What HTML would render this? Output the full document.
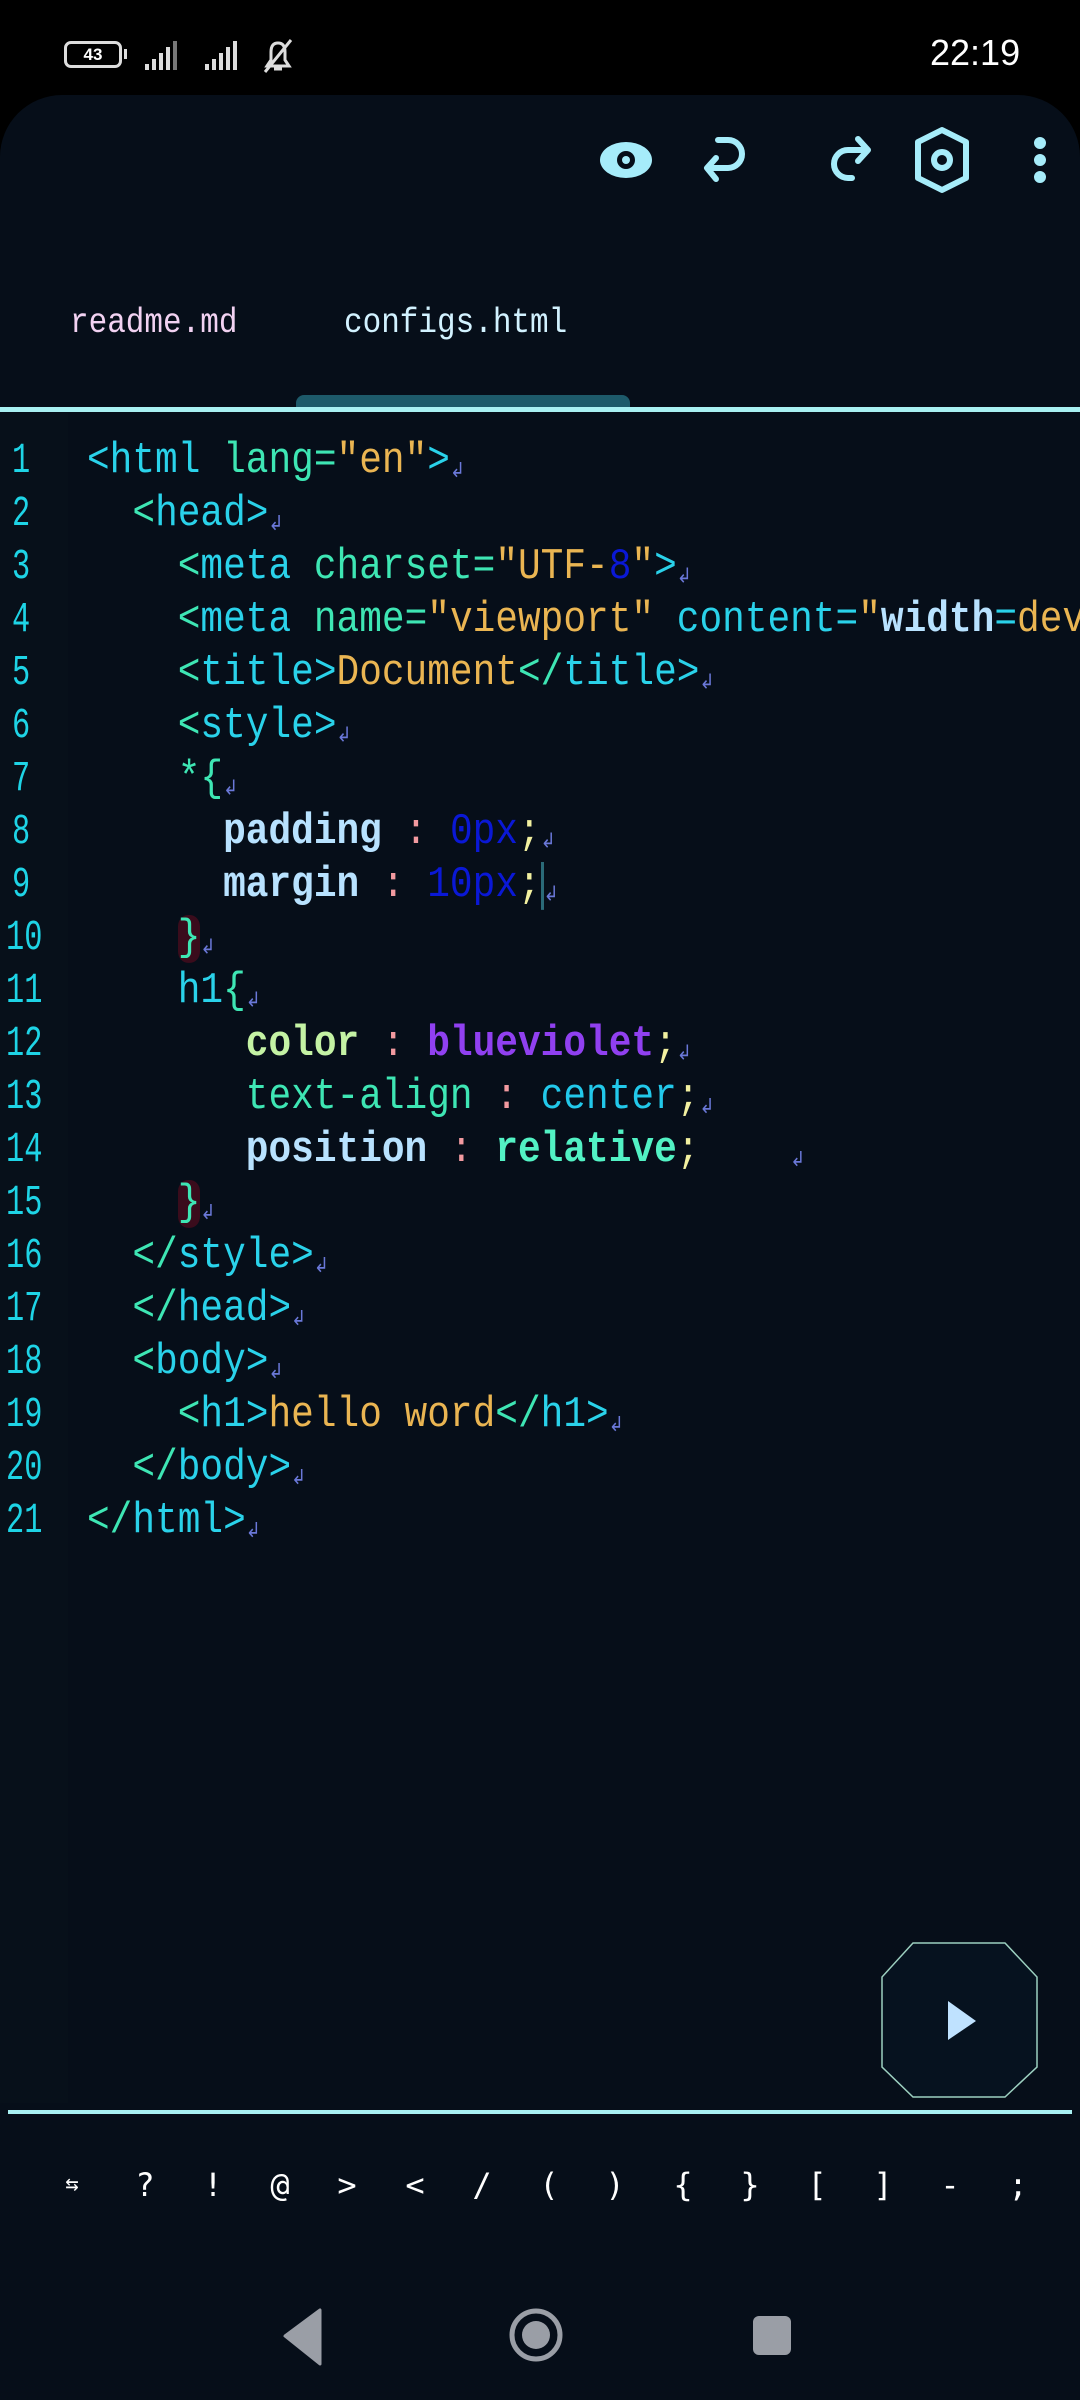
<!DOCTYPE html>
<html><head><meta charset="utf-8"><style>
*{margin:0;padding:0;box-sizing:border-box}
body{width:1080px;height:2400px;background:#000;position:relative;overflow:hidden;font-family:"Liberation Mono",monospace}
.panel{position:absolute;left:0;top:95px;width:1080px;height:2305px;background:#060e19;border-radius:62px 62px 0 0}
.gut{position:absolute;left:0;top:413px;width:68px;height:1690px;background:#07101a}
.ln{position:absolute;left:6px;color:#1ed4e6;font-size:37px;line-height:53px;height:53px;transform:scale(0.82,1.14);transform-origin:left center}
.cl{position:absolute;left:87px;white-space:pre;font-size:37.8px;line-height:53px;height:53px;color:#2ad2ea;transform:scaleY(1.14);transform-origin:left center}
.t{color:#2ad2ea}.a{color:#3ee6b4}.s{color:#eab552}.n{color:#0a18d6}.p{color:#b8e2ff;font-weight:bold}.c{color:#f29aa0}.y{color:#f2f0a0}
.r{color:#6a78d8;font-size:18px;vertical-align:-4px}
.g{color:#3ee6b4}.br{background:#3a0c1c;border-radius:10px}
.sym{position:absolute;top:2166px;color:#fff;font-size:32px;width:40px;text-align:center;font-family:"DejaVu Sans Mono",monospace}
.tab{position:absolute;top:306px;font-size:31px;transform:scaleY(1.15);transform-origin:left center}
</style></head><body>
<div style="position:absolute;left:64px;top:41px;width:58px;height:27px;border:3px solid #ddd;border-radius:7px;color:#fff;font:bold 17px 'Liberation Sans',sans-serif;text-align:center;line-height:21px">43</div>
<div style="position:absolute;left:124px;top:49px;width:3px;height:10px;background:#ddd"></div>
<svg style="position:absolute;left:143px;top:38px" width="160" height="36">
<g fill="#ddd"><rect x="2" y="26" width="4" height="6"/><rect x="9" y="21" width="4" height="11"/><rect x="16" y="15" width="4" height="17"/><rect x="23" y="9" width="4" height="23"/><rect x="30" y="3" width="4" height="29" fill="#777"/>
<rect x="62" y="26" width="4" height="6"/><rect x="69" y="21" width="4" height="11"/><rect x="76" y="15" width="4" height="17"/><rect x="83" y="9" width="4" height="23"/><rect x="90" y="3" width="4" height="29"/></g>
<path d="M124 28 L128 22 L128 14 Q128 5 135 5 Q142 5 142 14 L142 22 L146 28 Z M131 31 h8" fill="none" stroke="#ddd" stroke-width="3"/><path d="M122 34 L148 2" stroke="#ddd" stroke-width="3"/></svg>
<div style="position:absolute;left:930px;top:32px;color:#fff;font:36px 'Liberation Sans',sans-serif">22:19</div>
<div class="panel"></div>
<svg style="position:absolute;left:590px;top:125px" width="480" height="70" fill="none" stroke="#a6ecfa" stroke-width="6" stroke-linecap="round" stroke-linejoin="round">
<ellipse cx="36" cy="35" rx="26" ry="18" fill="#a6ecfa" stroke="none"/><circle cx="36" cy="35" r="9" fill="#060e19" stroke="none"/><circle cx="36" cy="35" r="4" fill="#a6ecfa" stroke="none"/>
<path d="M128 15 h10 a14 14 0 0 1 0 28 h-20 M126 33 l-9 10 l9 11"/>
<path d="M258 25 a14 14 0 0 0 0 28 h4 M258 25 h18 M268 14 l10 11 l-10 11"/>
<path d="M352 5 l24 12 v36 l-24 12 l-24-12 v-36 z"/><circle cx="352" cy="35" r="8"/>
<circle cx="450" cy="18" r="3" fill="#a6ecfa"/><circle cx="450" cy="35" r="3" fill="#a6ecfa"/><circle cx="450" cy="52" r="3" fill="#a6ecfa"/></svg>
<div class="tab" style="left:70px;color:#f2d2f2">readme.md</div>
<div class="tab" style="left:344px;color:#d2f2ff">configs.html</div>
<div style="position:absolute;left:296px;top:395px;width:334px;height:14px;background:#1d5a6a;border-radius:8px 8px 0 0"></div>
<div style="position:absolute;left:0;top:407px;width:1080px;height:5px;background:#a8f0f2"></div>
<div class="gut"></div>
<div class="ln" style="top:436px;left:12px">1</div><div class="ln" style="top:489px;left:12px">2</div><div class="ln" style="top:542px;left:12px">3</div><div class="ln" style="top:595px;left:12px">4</div><div class="ln" style="top:648px;left:12px">5</div><div class="ln" style="top:701px;left:12px">6</div><div class="ln" style="top:754px;left:12px">7</div><div class="ln" style="top:807px;left:12px">8</div><div class="ln" style="top:860px;left:12px">9</div>
<div class="ln" style="top:913px">10</div><div class="ln" style="top:966px">11</div><div class="ln" style="top:1019px">12</div><div class="ln" style="top:1072px">13</div><div class="ln" style="top:1125px">14</div><div class="ln" style="top:1178px">15</div><div class="ln" style="top:1231px">16</div><div class="ln" style="top:1284px">17</div><div class="ln" style="top:1337px">18</div><div class="ln" style="top:1390px">19</div><div class="ln" style="top:1443px">20</div><div class="ln" style="top:1496px">21</div>
<div class="cl" style="top:436px"><span class="t">&lt;html</span> <span class="a">lang=</span><span class="s">"en"</span><span class="t">&gt;</span><span class="r">↲</span></div>
<div class="cl" style="top:489px">  <span class="g">&lt;</span>head&gt;<span class="r">↲</span></div>
<div class="cl" style="top:542px">    <span class="g">&lt;</span>meta <span class="a">charset=</span><span class="s">"UTF-</span><span class="n">8</span><span class="s">"</span>&gt;<span class="r">↲</span></div>
<div class="cl" style="top:595px">    <span class="g">&lt;</span>meta <span class="a">name=</span><span class="s">"viewport"</span> content=<span class="s">"</span><span class="p">width</span>=<span class="s">dev</span></div>
<div class="cl" style="top:648px">    <span class="g">&lt;</span>title&gt;<span class="s">Document</span><span class="g">&lt;/</span>title&gt;<span class="r">↲</span></div>
<div class="cl" style="top:701px">    <span class="g">&lt;</span>style&gt;<span class="r">↲</span></div>
<div class="cl" style="top:754px">    <span class="a">*{</span><span class="r">↲</span></div>
<div class="cl" style="top:807px">      <span class="p">padding</span> <span class="c">:</span> <span class="n">0px</span><span class="y">;</span><span class="r">↲</span></div>
<div class="cl" style="top:860px">      <span class="p">margin</span> <span class="c">:</span> <span class="n">10px</span><span class="y">;</span><span style="border-left:3px solid #2a6a78"></span><span class="r">↲</span></div>
<div class="cl" style="top:913px">    <span class="a br">}</span><span class="r">↲</span></div>
<div class="cl" style="top:966px">    h1<span class="g">{</span><span class="r">↲</span></div>
<div class="cl" style="top:1019px">       <span style="color:#c4f2a4;font-weight:bold">color</span> <span class="c">:</span> <span style="color:#9040f0;font-weight:bold">blueviolet</span><span class="y">;</span><span class="r">↲</span></div>
<div class="cl" style="top:1072px">       <span class="a">text-align</span> <span class="c">:</span> <span style="color:#22c8ea">center</span><span class="y">;</span><span class="r">↲</span></div>
<div class="cl" style="top:1125px">       <span class="p">position</span> <span class="c">:</span> <span style="color:#52f2c4;font-weight:bold">relative</span><span class="y">;</span>    <span class="r">↲</span></div>
<div class="cl" style="top:1178px">    <span class="a br">}</span><span class="r">↲</span></div>
<div class="cl" style="top:1231px">  <span class="g">&lt;/</span>style&gt;<span class="r">↲</span></div>
<div class="cl" style="top:1284px">  <span class="g">&lt;/</span>head&gt;<span class="r">↲</span></div>
<div class="cl" style="top:1337px">  <span class="g">&lt;</span>body&gt;<span class="r">↲</span></div>
<div class="cl" style="top:1390px">    <span class="g">&lt;</span>h1&gt;<span class="s">hello word</span><span class="g">&lt;/</span>h1&gt;<span class="r">↲</span></div>
<div class="cl" style="top:1443px">  <span class="g">&lt;/</span>body&gt;<span class="r">↲</span></div>
<div class="cl" style="top:1496px"><span class="g">&lt;/</span>html&gt;<span class="r">↲</span></div>
<svg style="position:absolute;left:880px;top:1940px" width="160" height="160"><path d="M33 3 H125 L157 37 V127 L125 157 H33 L2 127 V37 Z" fill="#06121f" stroke="#9cd0c0" stroke-width="1.5"/><path d="M68 61 L96 81 L68 100 Z" fill="#bfe2ff"/></svg>
<div style="position:absolute;left:8px;top:2110px;width:1064px;height:4px;background:#a8f0f2"></div>
<div class="sym" style="left:52px;font-size:22px;top:2172px">⇆</div>
<div class="sym" style="left:125px">?</div><div class="sym" style="left:193px">!</div><div class="sym" style="left:260px">@</div><div class="sym" style="left:327px">&gt;</div><div class="sym" style="left:395px">&lt;</div><div class="sym" style="left:462px">/</div><div class="sym" style="left:529px">(</div><div class="sym" style="left:595px">)</div><div class="sym" style="left:663px">{</div><div class="sym" style="left:730px">}</div><div class="sym" style="left:797px">[</div><div class="sym" style="left:863px">]</div><div class="sym" style="left:930px">-</div><div class="sym" style="left:998px">;</div>
<svg style="position:absolute;left:270px;top:2300px" width="540" height="70"><path d="M50 10 V64 L15 36 Z" fill="#9a9ea6" stroke="#9a9ea6" stroke-width="3" stroke-linejoin="round"/><circle cx="266" cy="35" r="24" fill="none" stroke="#9a9ea6" stroke-width="5"/><circle cx="266" cy="35" r="14" fill="#9a9ea6"/><rect x="483" y="16" width="38" height="39" rx="6" fill="#9a9ea6"/></svg>
</body></html>
